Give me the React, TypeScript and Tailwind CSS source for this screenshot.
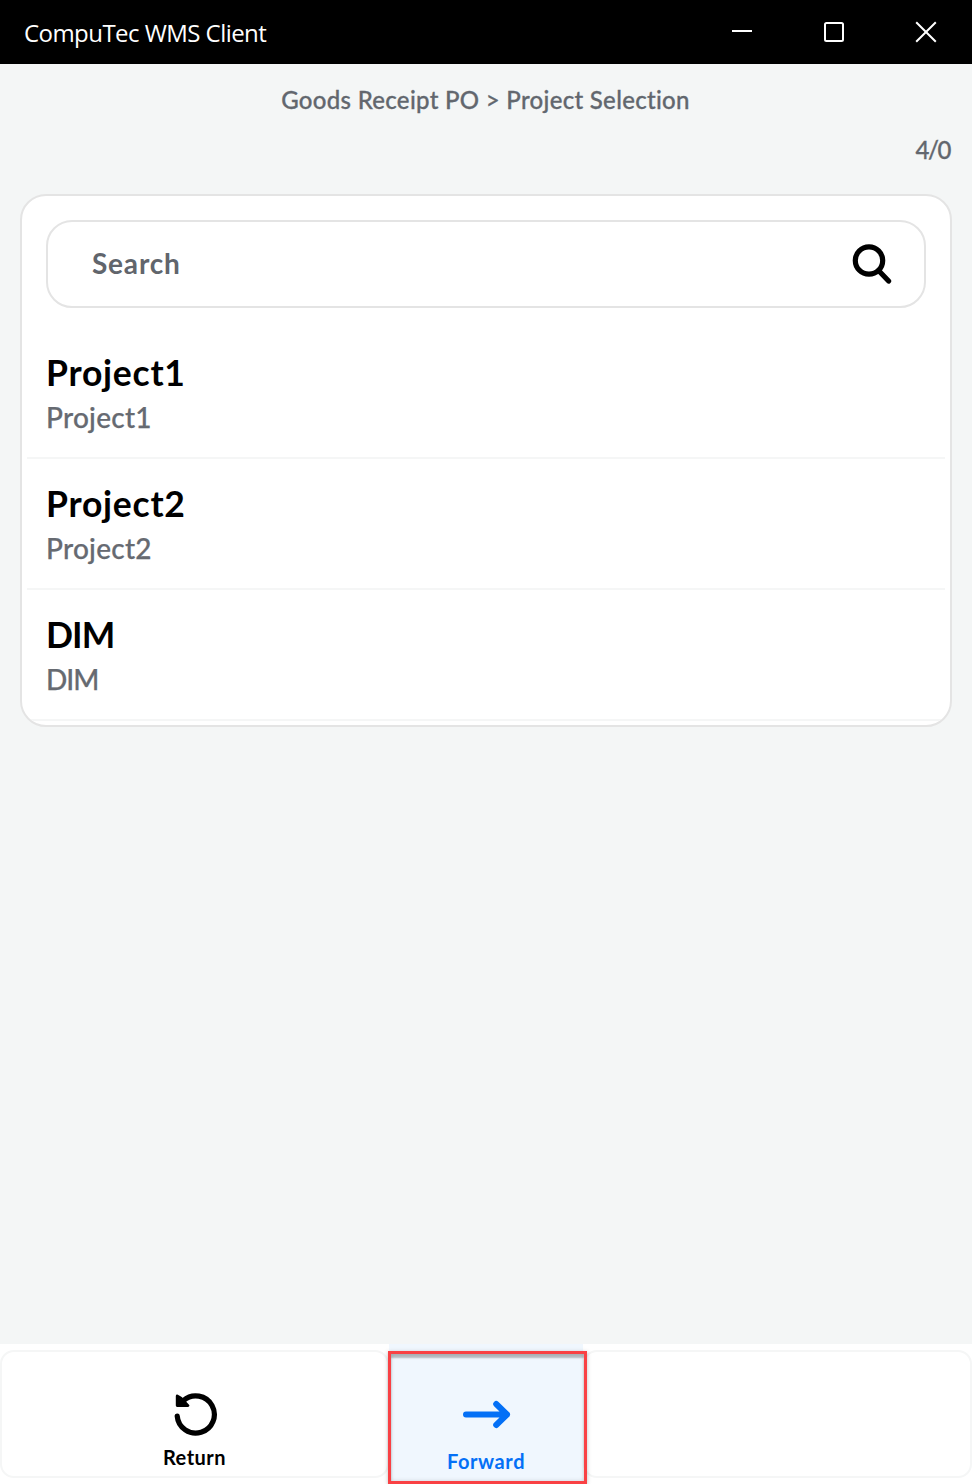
import React from "react";

const projects = [
  { name: "Project1", code: "Project1", nameSpacing: "tracking-[0.75px]", codeSpacing: "tracking-[0.25px]" },
  { name: "Project2", code: "Project2", nameSpacing: "tracking-[0.75px]", codeSpacing: "tracking-[0.25px]" },
  { name: "DIM", code: "DIM", nameSpacing: "tracking-[-0.9px]", codeSpacing: "tracking-[-1px]" },
];

function TitleBar() {
  return (
    <header className="flex h-16 shrink-0 items-center justify-between bg-black pl-6 text-white">
      <h1 className="pt-0.5 font-['Open_Sans','Noto_Sans',sans-serif] text-[24px] leading-8 tracking-[-0.55px]">
        <span className="whitespace-nowrap">CompuTec WMS Client</span>
      </h1>
      <div className="flex h-full">
        <button aria-label="Minimize" className="flex w-[92px] items-center justify-center">
          <svg width="20" height="20" viewBox="0 0 20 20">
            <path d="M0 9h20" stroke="currentColor" strokeWidth="2" />
          </svg>
        </button>
        <button aria-label="Maximize" className="flex w-[92px] items-center justify-center">
          <svg width="20" height="20" viewBox="0 0 20 20" fill="none">
            <rect x="1" y="1" width="18" height="18" rx="1.5" stroke="currentColor" strokeWidth="2" />
          </svg>
        </button>
        <button aria-label="Close" className="flex w-[92px] items-center justify-center">
          <svg width="22" height="22" viewBox="0 0 22 22">
            <path d="M1.2 1.2l19.6 19.6M20.8 1.2L1.2 20.8" stroke="currentColor" strokeWidth="2" />
          </svg>
        </button>
      </div>
    </header>
  );
}

function SearchField() {
  return (
    <div className="mx-[19px] flex h-[88px] items-center justify-between rounded-[26px] border-2 border-[#e4e4e4] pr-8 pl-11">
      <span className="pb-0.5 text-[28px] leading-9 font-bold tracking-[0.8px] text-[#61656c]">Search</span>
      <svg width="40" height="40" viewBox="0 0 40 40" fill="none" stroke="black">
        <circle cx="17" cy="16.5" r="13.7" strokeWidth="5.2" />
        <path d="M27 27l9.6 10" strokeWidth="5.2" strokeLinecap="round" />
      </svg>
    </div>
  );
}

function Footer() {
  return (
    <footer className="grid h-[140px] shrink-0 grid-cols-[389px_194px_389px] bg-white">
      <button className="mt-1.5 flex h-32 flex-col items-center justify-start rounded-[14px] border-2 border-[#f5f6f6] pt-[40px] pl-0.5">
        <svg width="44" height="44" viewBox="0 0 44 44" fill="none" className="mb-[7px] shrink-0">
          <path d="M3.2 24A18.6 18.6 0 1 0 9.5 8.5" stroke="black" strokeWidth="5.2" strokeLinecap="round" />
          <path d="M3.2 4l3.8 2.2L14 13.6H3.2z" fill="black" stroke="black" strokeWidth="2.8" strokeLinejoin="round" />
        </svg>
        <span className="pr-0.5 text-[20px] leading-7 font-bold tracking-[0.5px]">Return</span>
      </button>
      <button className="relative flex flex-col items-center justify-start bg-[#f0f7fe] pt-[56px] pl-px text-[#0470f6]">
        <svg width="48" height="30" viewBox="0 0 48 30" fill="none" className="mb-[17px] shrink-0">
          <path d="M3 14.5H44M33.2 4L44 14.5L33.2 25" stroke="currentColor" strokeWidth="6" strokeLinecap="round" strokeLinejoin="round" />
        </svg>
        <span className="pr-px text-[20px] leading-7 font-bold tracking-[0.6px]">Forward</span>
        <span className="absolute top-[7px] -left-px h-[133px] w-[199px] border-3 border-[#f94144] shadow-[inset_0_4px_2px_rgba(0,0,0,0.24),inset_0_0_4px_rgba(0,0,0,0.15),0_1px_4px_rgba(0,0,0,0.25)]" />
      </button>
      <div className="mt-1.5 h-32 rounded-[14px] border-2 border-[#f5f6f6]" />
    </footer>
  );
}

export default function App() {
  return (
    <div className="flex h-[1484px] w-[972px] flex-col overflow-hidden bg-[#f4f6f6] font-['Lato','Open_Sans',sans-serif] text-black">
      <TitleBar />
      <main className="flex-1 px-5">
        <nav className="pt-[18px] text-center text-[24px] leading-9 font-medium tracking-[0.3px] text-[#62676e] [-webkit-text-stroke:0.3px_#62676e]">
          <span className="pr-px whitespace-nowrap">Goods Receipt PO &gt; Project Selection</span>
        </nav>
        <div className="mt-3.5 text-right text-[24px] leading-9 font-medium tracking-[-1.4px] text-[#62676e] [-webkit-text-stroke:0.3px_#62676e]">
          <span className="pr-0.5">4/0</span>
        </div>
        <section className="mt-[26px] h-[533px] overflow-hidden rounded-[26px] border-2 border-[#e4e4e4] bg-white px-[5px] pt-6">
          <SearchField />
          <ul className="pt-5">
            {projects.map((p) => (
              <li key={p.name} className="h-[131px] border-b-2 border-[#f5f6f6] px-[19px] pt-[22px]">
                <div className={`text-[35.5px] leading-[46px] font-bold ${p.nameSpacing}`}><span>{p.name}</span></div>
                <div className={`text-[28px] leading-[42px] font-medium text-[#666a71] [-webkit-text-stroke:0.25px_#666a71] ${p.codeSpacing}`}><span>{p.code}</span></div>
              </li>
            ))}
          </ul>
        </section>
      </main>
      <Footer />
    </div>
  );
}
